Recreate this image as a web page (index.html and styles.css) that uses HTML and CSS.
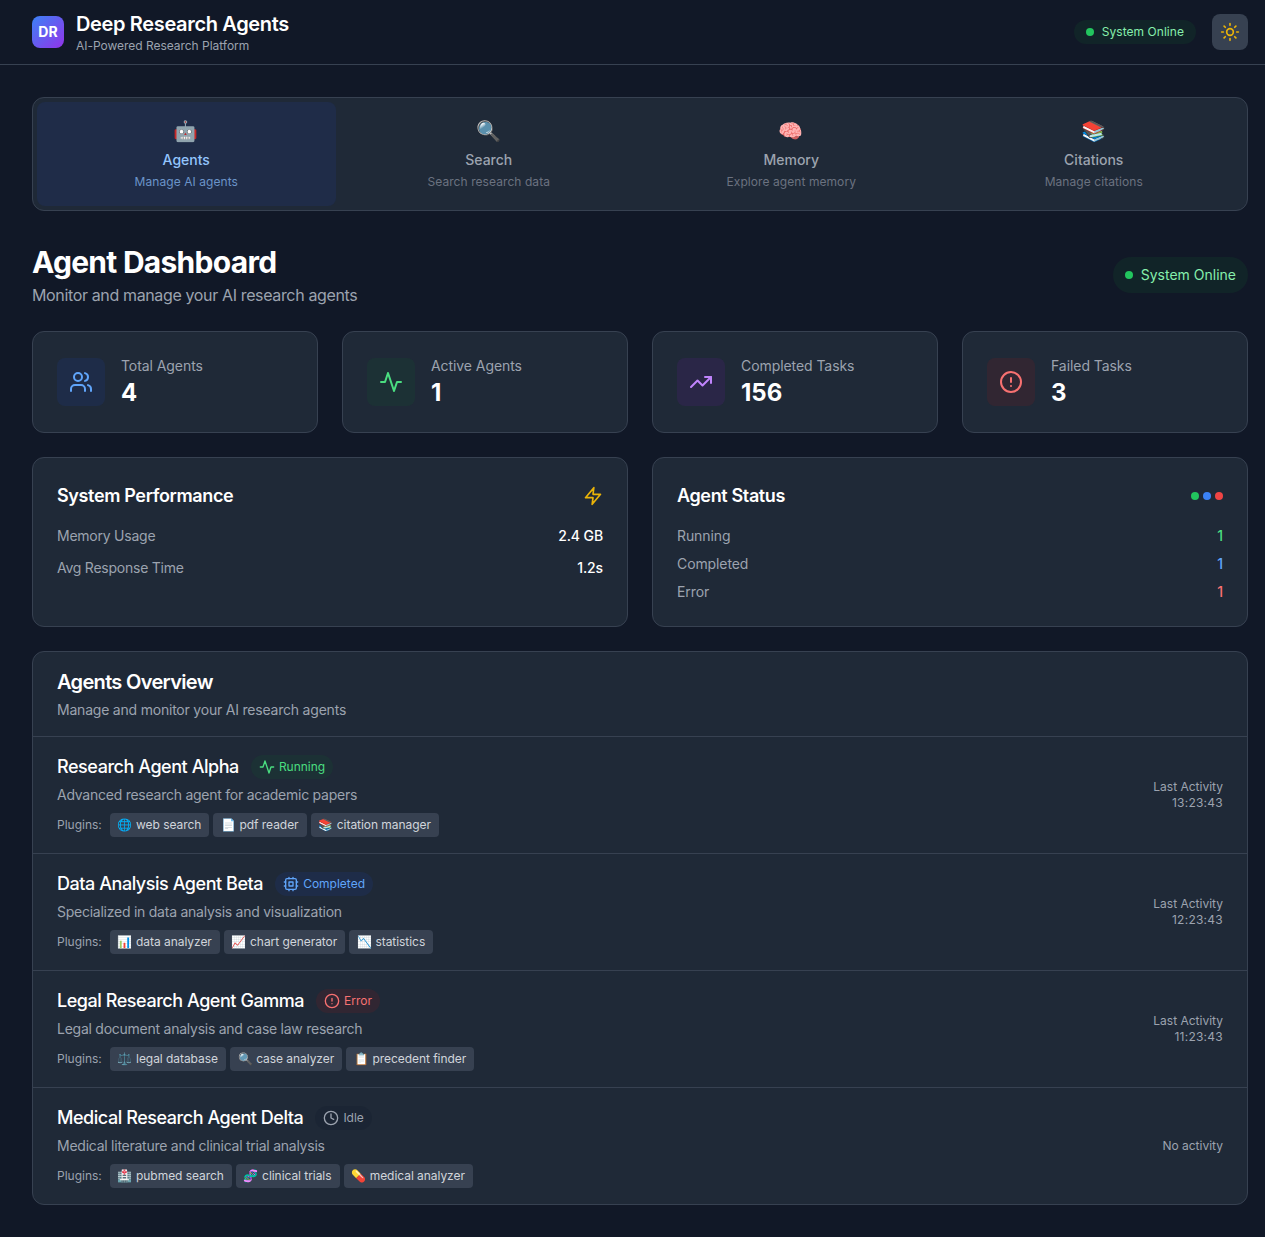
FILE: index.html
```html
<!DOCTYPE html>
<html lang="en">

<head>
  <meta charset="UTF-8" />
  <title>Deep Research Agents</title>
  <link rel="stylesheet" href="styles.css">
</head>

<body>
  <header class="topbar">
    <div class="brand">
      <div class="logo">DR</div>
      <div>
        <h1>Deep Research Agents</h1>
        <p>AI-Powered Research Platform</p>
      </div>
    </div>
    <div class="topbar-right">
      <div class="online small"><span class="dot"></span>System Online</div>
      <button class="theme">
        <svg width="20" height="20" viewBox="0 0 24 24" fill="none" stroke="#eab308" stroke-width="2" stroke-linecap="round" stroke-linejoin="round"><circle cx="12" cy="12" r="4"/><path d="M12 2v2M12 20v2M4.93 4.93l1.41 1.41M17.66 17.66l1.41 1.41M2 12h2M20 12h2M6.34 17.66l-1.41 1.41M19.07 4.93l-1.41 1.41"/></svg>
      </button>
    </div>
  </header>

  <main class="content">
    <nav class="tabs">
      <div class="tab active"><span class="tab-icon">🤖</span><strong>Agents</strong><small>Manage AI agents</small></div>
      <div class="tab"><span class="tab-icon">🔍</span><strong>Search</strong><small>Search research data</small></div>
      <div class="tab"><span class="tab-icon">🧠</span><strong>Memory</strong><small>Explore agent memory</small></div>
      <div class="tab"><span class="tab-icon">📚</span><strong>Citations</strong><small>Manage citations</small></div>
    </nav>

    <section class="page-head">
      <div>
        <h2>Agent Dashboard</h2>
        <p>Monitor and manage your AI research agents</p>
      </div>
      <div class="online"><span class="dot"></span>System Online</div>
    </section>

    <section class="stats">
      <div class="card stat">
        <div class="stat-icon blue">
          <svg width="24" height="24" viewBox="0 0 24 24" fill="none" stroke="currentColor" stroke-width="2" stroke-linecap="round" stroke-linejoin="round"><path d="M16 21v-2a4 4 0 0 0-4-4H6a4 4 0 0 0-4 4v2"/><circle cx="9" cy="7" r="4"/><path d="M22 21v-2a4 4 0 0 0-3-3.87"/><path d="M16 3.13a4 4 0 0 1 0 7.75"/></svg>
        </div>
        <div><div class="stat-label">Total Agents</div><div class="stat-value">4</div></div>
      </div>
      <div class="card stat">
        <div class="stat-icon green">
          <svg width="24" height="24" viewBox="0 0 24 24" fill="none" stroke="currentColor" stroke-width="2" stroke-linecap="round" stroke-linejoin="round"><path d="M22 12h-4l-3 9L9 3l-3 9H2"/></svg>
        </div>
        <div><div class="stat-label">Active Agents</div><div class="stat-value">1</div></div>
      </div>
      <div class="card stat">
        <div class="stat-icon purple">
          <svg width="24" height="24" viewBox="0 0 24 24" fill="none" stroke="currentColor" stroke-width="2" stroke-linecap="round" stroke-linejoin="round"><path d="M22 7l-8.5 8.5-5-5L2 17"/><path d="M16 7h6v6"/></svg>
        </div>
        <div><div class="stat-label">Completed Tasks</div><div class="stat-value">156</div></div>
      </div>
      <div class="card stat">
        <div class="stat-icon red">
          <svg width="24" height="24" viewBox="0 0 24 24" fill="none" stroke="currentColor" stroke-width="2" stroke-linecap="round" stroke-linejoin="round"><circle cx="12" cy="12" r="10"/><path d="M12 8v4M12 16h.01"/></svg>
        </div>
        <div><div class="stat-label">Failed Tasks</div><div class="stat-value">3</div></div>
      </div>
    </section>

    <section class="panels">
      <div class="card panel">
        <div class="panel-head">
          <h3>System Performance</h3>
          <svg width="20" height="20" viewBox="0 0 24 24" fill="none" stroke="#eab308" stroke-width="2" stroke-linecap="round" stroke-linejoin="round"><path d="M13 2L3 14h9l-1 8 10-12h-9l1-8z"/></svg>
        </div>
        <div class="perf-rows">
          <div class="row"><span>Memory Usage</span><b>2.4 GB</b></div>
          <div class="row"><span>Avg Response Time</span><b>1.2s</b></div>
        </div>
      </div>
      <div class="card panel">
        <div class="panel-head">
          <h3>Agent Status</h3>
          <div class="dots"><i class="d-green"></i><i class="d-blue"></i><i class="d-red"></i></div>
        </div>
        <div class="status-rows">
          <div class="row"><span>Running</span><b class="t-green">1</b></div>
          <div class="row"><span>Completed</span><b class="t-blue">1</b></div>
          <div class="row"><span>Error</span><b class="t-red">1</b></div>
        </div>
      </div>
    </section>

    <section class="card overview">
      <div class="overview-head">
        <h3>Agents Overview</h3>
        <p>Manage and monitor your AI research agents</p>
      </div>

      <div class="agent">
        <div>
          <div class="agent-title">
            <h4>Research Agent Alpha</h4>
            <span class="badge running"><svg width="16" height="16" viewBox="0 0 24 24" fill="none" stroke="currentColor" stroke-width="2" stroke-linecap="round" stroke-linejoin="round"><path d="M22 12h-4l-3 9L9 3l-3 9H2"/></svg>Running</span>
          </div>
          <p class="agent-desc">Advanced research agent for academic papers</p>
          <div class="plugins"><span class="plugins-label">Plugins:</span><span class="plugin">🌐 web search</span><span class="plugin">📄 pdf reader</span><span class="plugin">📚 citation manager</span></div>
        </div>
        <div class="activity">Last Activity<br><span class="time">13:23:43</span></div>
      </div>

      <div class="agent">
        <div>
          <div class="agent-title">
            <h4>Data Analysis Agent Beta</h4>
            <span class="badge completed"><svg width="16" height="16" viewBox="0 0 24 24" fill="none" stroke="currentColor" stroke-width="2" stroke-linecap="round" stroke-linejoin="round"><rect x="4" y="4" width="16" height="16" rx="2"/><rect x="9" y="9" width="6" height="6"/><path d="M15 2v2M15 20v2M2 15h2M2 9h2M20 15h2M20 9h2M9 2v2M9 20v2"/></svg>Completed</span>
          </div>
          <p class="agent-desc">Specialized in data analysis and visualization</p>
          <div class="plugins"><span class="plugins-label">Plugins:</span><span class="plugin">📊 data analyzer</span><span class="plugin">📈 chart generator</span><span class="plugin">📉 statistics</span></div>
        </div>
        <div class="activity">Last Activity<br><span class="time">12:23:43</span></div>
      </div>

      <div class="agent">
        <div>
          <div class="agent-title">
            <h4>Legal Research Agent Gamma</h4>
            <span class="badge error"><svg width="16" height="16" viewBox="0 0 24 24" fill="none" stroke="currentColor" stroke-width="2" stroke-linecap="round" stroke-linejoin="round"><circle cx="12" cy="12" r="10"/><path d="M12 8v4M12 16h.01"/></svg>Error</span>
          </div>
          <p class="agent-desc">Legal document analysis and case law research</p>
          <div class="plugins"><span class="plugins-label">Plugins:</span><span class="plugin">⚖️ legal database</span><span class="plugin">🔍 case analyzer</span><span class="plugin">📋 precedent finder</span></div>
        </div>
        <div class="activity">Last Activity<br><span class="time">11:23:43</span></div>
      </div>

      <div class="agent">
        <div>
          <div class="agent-title">
            <h4>Medical Research Agent Delta</h4>
            <span class="badge idle"><svg width="16" height="16" viewBox="0 0 24 24" fill="none" stroke="currentColor" stroke-width="2" stroke-linecap="round" stroke-linejoin="round"><circle cx="12" cy="12" r="10"/><path d="M12 6v6l4 2"/></svg>Idle</span>
          </div>
          <p class="agent-desc">Medical literature and clinical trial analysis</p>
          <div class="plugins"><span class="plugins-label">Plugins:</span><span class="plugin">🏥 pubmed search</span><span class="plugin">🧬 clinical trials</span><span class="plugin">💊 medical analyzer</span></div>
        </div>
        <div class="activity">No activity</div>
      </div>
    </section>
  </main>
</body>

</html>
```

FILE: styles.css
```css
* {
  padding: 0;
  margin: 0;
  box-sizing: border-box;
}

body {
  background: #111827;
  color: #fff;
  font-family: Inter, "Noto Color Emoji", "Liberation Sans", sans-serif;
  overflow-x: hidden;
}

h1, h2, h3, h4 {
  font-weight: 600;
}

/* top bar */
.topbar {
  height: 65px;
  border-bottom: 1px solid #374151;
  padding: 0 17px 0 32px;
  display: flex;
  align-items: center;
  justify-content: space-between;
}

.brand {
  display: flex;
  align-items: center;
  gap: 12px;
}

.logo {
  width: 32px;
  height: 32px;
  border-radius: 8px;
  background: linear-gradient(135deg, #3b82f6, #9333ea);
  font-size: 14px;
  font-weight: 700;
  line-height: 32px;
  text-align: center;
}

.brand h1 {
  font-size: 20px;
  line-height: 28px;
  letter-spacing: -0.35px;
}

.brand p {
  font-size: 12px;
  line-height: 16px;
  color: #9ca3af;
  letter-spacing: -0.03px;
}

.topbar-right {
  display: flex;
  align-items: center;
  gap: 16px;
}

.online {
  display: flex;
  align-items: center;
  gap: 8px;
  height: 36px;
  padding: 0 12px;
  border-radius: 18px;
  background: rgba(20, 83, 45, 0.2);
  color: #86efac;
  font-size: 14px;
  line-height: 20px;
}

.online.small {
  height: 24px;
  font-size: 12px;
  line-height: 16px;
  letter-spacing: 0.05px;
}

.dot {
  width: 8px;
  height: 8px;
  border-radius: 50%;
  background: #22c55e;
}

.theme {
  width: 36px;
  height: 36px;
  border: 0;
  border-radius: 8px;
  background: #374151;
  display: flex;
  align-items: center;
  justify-content: center;
}

/* main column */
.content {
  padding: 32px 17px 32px 32px;
}

.card {
  background: #1f2937;
  border: 1px solid #374151;
  border-radius: 12px;
}

.tabs {
  background: #1f2937;
  border: 1px solid #374151;
  border-radius: 12px;
  padding: 4px;
  display: grid;
  grid-template-columns: repeat(4, 1fr);
  gap: 4px;
}

.tab {
  height: 104px;
  border-radius: 8px;
  padding-top: 15px;
  display: flex;
  flex-direction: column;
  align-items: center;
  color: #9ca3af;
}

.tab.active {
  background: #1f2c48;
  color: #93c5fd;
}

.tab-icon {
  font-size: 20px;
  line-height: 28px;
  margin-bottom: 5px;
}

.tab strong {
  font-size: 14px;
  font-weight: 500;
  line-height: 20px;
}

.tab small {
  font-size: 12px;
  line-height: 16px;
  margin-top: 4px;
  color: #6b7280;
  letter-spacing: 0.07px;
}

.tab.active small {
  color: #6b94c9;
}

.page-head {
  margin-top: 32px;
  display: flex;
  justify-content: space-between;
  align-items: center;
}

.page-head h2 {
  font-size: 30px;
  font-weight: 700;
  line-height: 36px;
  letter-spacing: -0.73px;
  margin-top: 1px;
  margin-bottom: -1px;
}

.page-head p {
  font-size: 16px;
  line-height: 24px;
  margin-top: 4px;
  color: #9ca3af;
  letter-spacing: -0.36px;
}

/* stat cards */
.stats {
  margin-top: 24px;
  display: grid;
  grid-template-columns: repeat(4, 1fr);
  gap: 24px;
}

.stat {
  height: 102px;
  padding: 0 24px;
  display: flex;
  align-items: center;
  gap: 16px;
}

.stat-icon {
  width: 48px;
  height: 48px;
  border-radius: 8px;
  display: flex;
  align-items: center;
  justify-content: center;
}

.blue { background: rgba(30, 58, 138, 0.2); color: #60a5fa; }
.green { background: rgba(20, 83, 45, 0.2); color: #4ade80; }
.purple { background: rgba(88, 28, 135, 0.2); color: #c084fc; }
.red { background: rgba(127, 29, 29, 0.2); color: #f87171; }

.stat-label {
  font-size: 14px;
  line-height: 20px;
  color: #9ca3af;
  letter-spacing: -0.07px;
}

.stat-value {
  font-size: 24px;
  font-weight: 700;
  line-height: 32px;
  margin-top: 1px;
  margin-bottom: -1px;
}

/* performance and status */
.panels {
  margin-top: 24px;
  display: grid;
  grid-template-columns: repeat(2, 1fr);
  gap: 24px;
}

.panel {
  height: 170px;
  padding: 24px;
}

.panel-head {
  display: flex;
  justify-content: space-between;
  align-items: center;
  height: 28px;
}

h3 {
  font-size: 18px;
  line-height: 28px;
  letter-spacing: -0.36px;
}

.perf-rows {
  margin-top: 16px;
  display: flex;
  flex-direction: column;
  gap: 12px;
}

.status-rows {
  margin-top: 16px;
  display: flex;
  flex-direction: column;
  gap: 8px;
}

.row {
  display: flex;
  justify-content: space-between;
  font-size: 14px;
  line-height: 20px;
  color: #9ca3af;
}

.perf-rows span {
  letter-spacing: -0.24px;
}

.status-rows span {
  letter-spacing: -0.1px;
}

.row b {
  font-weight: 500;
  color: #fff;
  letter-spacing: -0.1px;
}

.row b.t-green { color: #4ade80; }
.row b.t-blue { color: #60a5fa; }
.row b.t-red { color: #f87171; }

.dots {
  display: flex;
  gap: 4px;
}

.dots i {
  width: 8px;
  height: 8px;
  border-radius: 50%;
}

.d-green { background: #22c55e; }
.d-blue { background: #3b82f6; }
.d-red { background: #ef4444; }

/* agents list */
.overview {
  margin-top: 24px;
}

.overview-head {
  height: 84px;
  padding: 16px 24px 0;
}

.overview-head h3 {
  font-size: 20px;
  line-height: 28px;
  letter-spacing: -0.67px;
}

.overview-head p {
  font-size: 14px;
  line-height: 20px;
  margin-top: 4px;
  color: #9ca3af;
  letter-spacing: -0.21px;
}

.agent {
  height: 117px;
  border-top: 1px solid #374151;
  padding: 16px 24px 0;
  display: flex;
  justify-content: space-between;
  align-items: flex-start;
}

.agent-title {
  display: flex;
  align-items: center;
  gap: 12px;
  height: 28px;
}

.agent-title h4 {
  font-size: 18px;
  font-weight: 500;
  line-height: 28px;
  letter-spacing: -0.45px;
}

.badge {
  display: flex;
  align-items: center;
  gap: 4px;
  height: 24px;
  padding: 0 8px;
  border-radius: 12px;
  font-size: 12px;
  line-height: 16px;
}

.running { background: rgba(20, 83, 45, 0.2); color: #4ade80; }
.completed { background: rgba(30, 58, 138, 0.2); color: #60a5fa; }
.error { background: rgba(127, 29, 29, 0.2); color: #f87171; }
.idle { background: rgba(17, 24, 39, 0.2); color: #9ca3af; }

.agent-desc {
  font-size: 14px;
  line-height: 20px;
  margin-top: 4px;
  color: #9ca3af;
  letter-spacing: -0.25px;
}

.plugins {
  margin-top: 8px;
  display: flex;
  align-items: center;
  gap: 4px;
}

.plugins-label {
  font-size: 12px;
  line-height: 16px;
  color: #9ca3af;
  margin-right: 4px;
}

.plugin {
  height: 24px;
  line-height: 24px;
  padding: 0 8px;
  border-radius: 4px;
  background: #374151;
  color: #d1d5db;
  font-size: 12px;
  letter-spacing: -0.05px;
}

.activity {
  align-self: center;
  margin-top: -16px;
  font-size: 12px;
  line-height: 16px;
  text-align: right;
  color: #9ca3af;
}

.time {
  letter-spacing: 0.25px;
}
```
